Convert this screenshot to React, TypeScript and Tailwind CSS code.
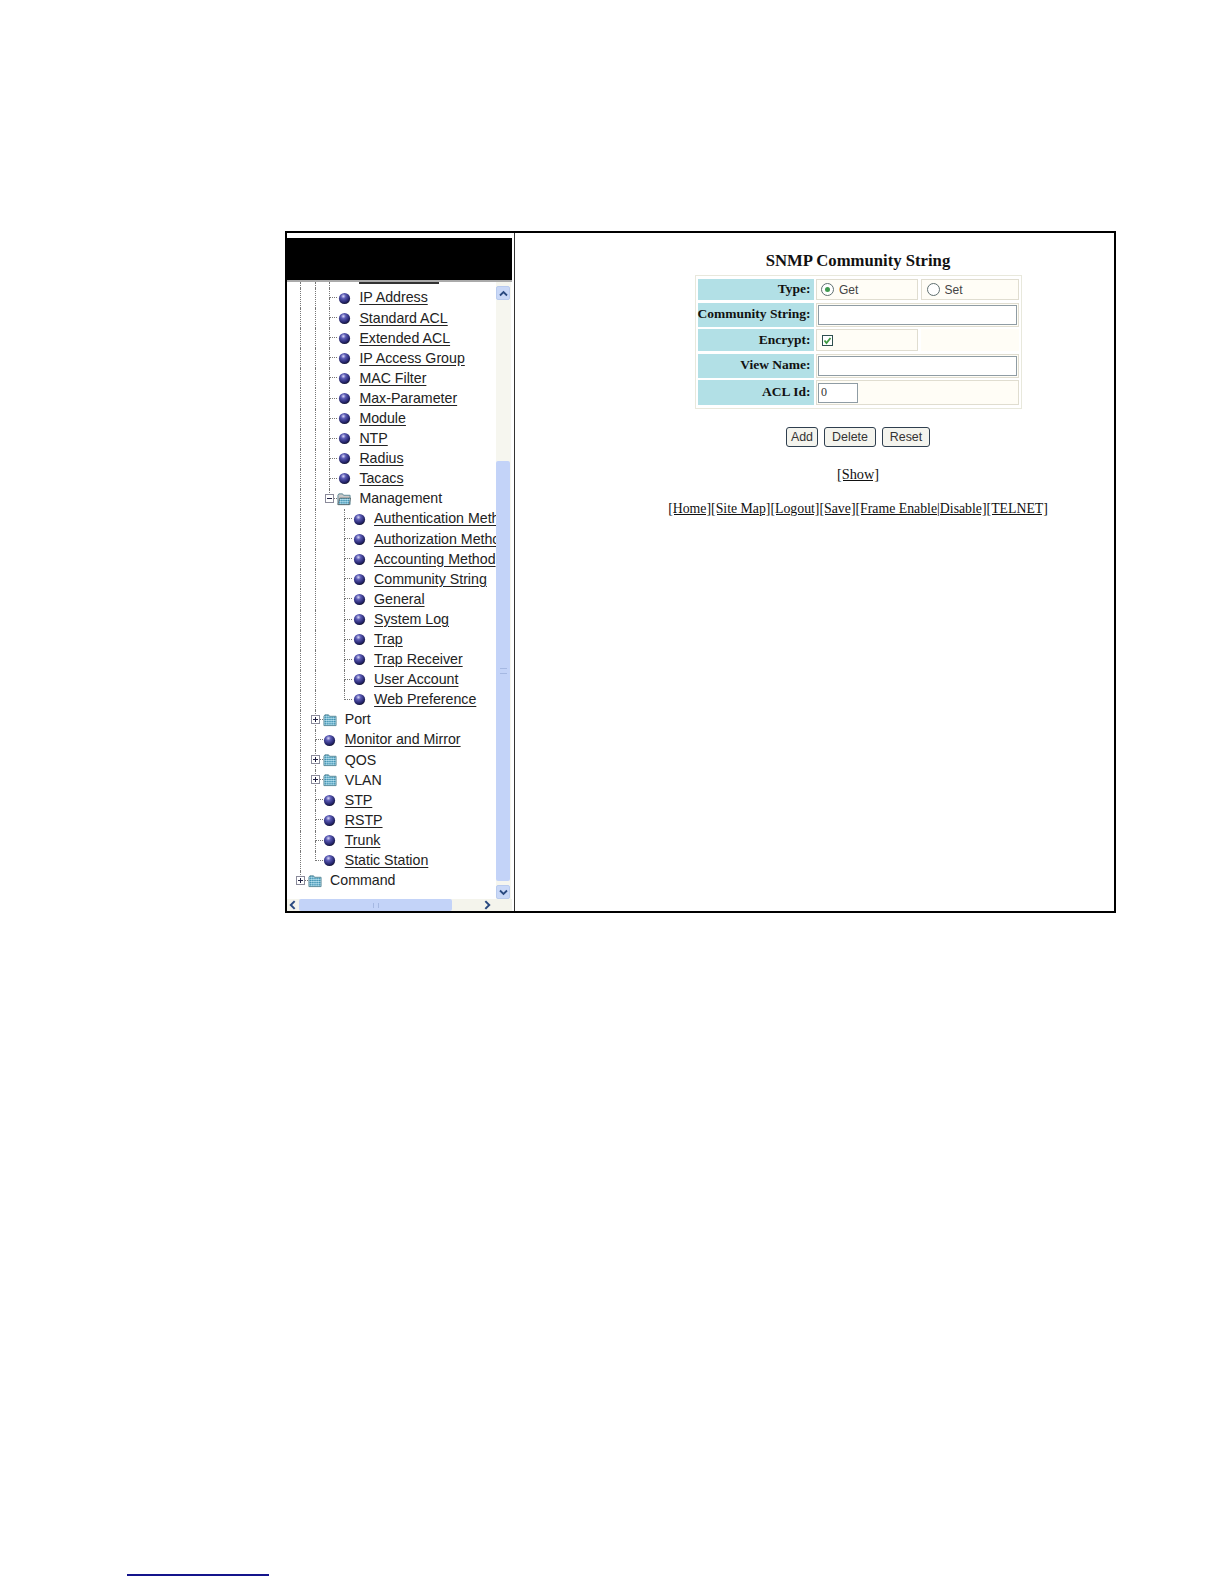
import React from 'react';

type TreeNode = { label: string; d: number; folder?: boolean; open?: boolean; last?: boolean; link?: boolean };

const nodes: TreeNode[] = [
  { label: 'IP Address', d: 2, link: true },
  { label: 'Standard ACL', d: 2, link: true },
  { label: 'Extended ACL', d: 2, link: true },
  { label: 'IP Access Group', d: 2, link: true },
  { label: 'MAC Filter', d: 2, link: true },
  { label: 'Max-Parameter', d: 2, link: true },
  { label: 'Module', d: 2, link: true },
  { label: 'NTP', d: 2, link: true },
  { label: 'Radius', d: 2, link: true },
  { label: 'Tacacs', d: 2, link: true },
  { label: 'Management', d: 2, folder: true, open: true, last: true },
  { label: 'Authentication Method', d: 3, link: true },
  { label: 'Authorization Method', d: 3, link: true },
  { label: 'Accounting Method', d: 3, link: true },
  { label: 'Community String', d: 3, link: true },
  { label: 'General', d: 3, link: true },
  { label: 'System Log', d: 3, link: true },
  { label: 'Trap', d: 3, link: true },
  { label: 'Trap Receiver', d: 3, link: true },
  { label: 'User Account', d: 3, link: true },
  { label: 'Web Preference', d: 3, link: true, last: true },
  { label: 'Port', d: 1, folder: true },
  { label: 'Monitor and Mirror', d: 1, link: true },
  { label: 'QOS', d: 1, folder: true },
  { label: 'VLAN', d: 1, folder: true },
  { label: 'STP', d: 1, link: true },
  { label: 'RSTP', d: 1, link: true },
  { label: 'Trunk', d: 1, link: true },
  { label: 'Static Station', d: 1, link: true, last: true },
  { label: 'Command', d: 0, folder: true, last: true },
];

const Bullet = () => (
  <svg width="13" height="13" viewBox="0 0 13 13">
    <defs>
      <radialGradient id="ball" cx="40%" cy="30%" r="72%">
        <stop offset="0%" stopColor="#d6d6f6" />
        <stop offset="30%" stopColor="#5a5ab4" />
        <stop offset="75%" stopColor="#26266e" />
        <stop offset="100%" stopColor="#14142e" />
      </radialGradient>
    </defs>
    <circle cx="6.5" cy="6.5" r="5.6" fill="url(#ball)" />
  </svg>
);

const Folder = ({ open }: { open?: boolean }) => (
  <svg width="15" height="14" viewBox="0 0 15 14">
    <defs>
      <pattern id="dither" width="2" height="2" patternUnits="userSpaceOnUse">
        <rect width="2" height="2" fill="#7fc4dd" />
        <rect width="1" height="1" fill="#2f7f9f" />
        <rect x="1" y="1" width="1" height="1" fill="#cfe9f2" />
      </pattern>
    </defs>
    <path d="M1 3 L2 1.5 H6 L7 3 H14 V13 H1 Z" fill={open ? '#c8c8c8' : 'url(#dither)'} stroke="#4f7f8f" strokeWidth="0.9" />
    {open && <path d="M3 6 H14.5 L13 13 H1 Z" fill="url(#dither)" stroke="#555" strokeWidth="0.7" />}
  </svg>
);

const Toggle = ({ open }: { open?: boolean }) => (
  <span className="absolute left-[-4px] top-[5px] flex h-[9px] w-[9px] items-center justify-center border border-[#8a8a9a] bg-white">
    <span className="absolute h-px w-[5px] bg-[#222244]" />
    {!open && <span className="absolute h-[5px] w-px bg-[#222244]" />}
  </span>
);

const Row = ({ node }: { node: TreeNode }) => {
  const cols = Array.from({ length: node.d }, (_, i) => i);
  return (
    <div className="flex h-[20.1px] items-center whitespace-nowrap">
      {cols.map((i) => (
        <div
          key={i}
          className={
            node.d === 3 && i === 2
              ? 'h-full w-[14.7px] shrink-0'
              : 'h-full w-[14.7px] shrink-0 border-l border-dotted border-[#777]'
          }
        />
      ))}
      <div className="relative flex h-full w-[8px] shrink-0 flex-col">
        <div className="h-1/2 border-b border-l border-dotted border-[#777]" />
        <div className={node.last ? 'h-1/2' : 'h-1/2 border-l border-dotted border-[#777]'} />
        {node.folder && <Toggle open={node.open} />}
      </div>
      <div className="flex w-[14px] shrink-0 items-center justify-center">
        {node.folder ? <Folder open={node.open} /> : <Bullet />}
      </div>
      <span className={node.link ? 'ml-[8px] text-[#222] underline underline-offset-2' : 'ml-[8px] text-[#222]'}>
        {node.label}
      </span>
    </div>
  );
};

const ScrollButton = ({ points }: { points: string }) => (
  <div className="flex h-[14px] w-[14px] items-center justify-center rounded-[2px] border border-[#b9cbee] bg-[#c9d8f7]">
    <svg width="9" height="7" viewBox="0 0 9 7">
      <polyline points={points} fill="none" stroke="#2a4a80" strokeWidth="1.8" />
    </svg>
  </div>
);

const Radio = ({ checked }: { checked?: boolean }) => (
  <span className="flex h-[13px] w-[13px] items-center justify-center rounded-full border border-[#5f6f70] bg-white">
    {checked && <span className="h-[5px] w-[5px] rounded-full bg-[#3f9a50]" />}
  </span>
);

const labelClass = 'flex items-center justify-end whitespace-nowrap bg-[#b2e0e6] pr-[3px] font-bold';
const valueClass = 'flex items-center border border-[#e0ddd0] bg-[#fffdf6]';
const inputClass = 'border border-[#8f9ca4] bg-white px-[2px] text-[12px] text-[#333] outline-none';
const buttonClass =
  'h-[20px] rounded-[3px] border border-[#2f3f4f] bg-[#f4f4ee] text-[12.4px] text-[#333]';

export default function App() {
  return (
    <div className="flex h-[1584px] w-[1224px] flex-col bg-white pt-[231px]">
      <div className="ml-[285px] flex h-[682px] w-[831px] border-2 border-black">
        <div className="flex w-[228px] shrink-0 flex-col border-r border-[#333] pr-[2px] font-['Liberation_Sans',sans-serif] text-[14.2px]">
          <div className="mt-[5px] h-[42px] shrink-0 bg-black" />
          <div className="h-[2px] shrink-0 bg-[#aaa]" />
          <div className="flex min-h-0 flex-1">
            <div className="w-[209px] shrink-0 overflow-hidden pl-[13px]">
              <div className="flex h-[6px]">
                <div className="w-[14.7px] border-l border-dotted border-[#777]" />
                <div className="w-[14.7px] border-l border-dotted border-[#777]" />
                <div className="w-[30px] border-l border-dotted border-[#777]" />
                <div className="h-[2px] w-[80px] border-b-2 border-[#333]" />
              </div>
              {nodes.map((node) => (
                <Row key={node.label} node={node} />
              ))}
            </div>
            <div className="flex w-[15px] shrink-0 flex-col bg-[#f6f6ef] pt-[4px]">
              <ScrollButton points="1,5.5 4.5,2 8,5.5" />
              <div className="mt-[161px] flex h-[420px] w-[14px] items-center justify-center rounded-[2px] bg-[#c3d3f8]">
                <div className="h-[6px] w-[7px] border-y border-[#a5b8e2]" />
              </div>
              <div className="mt-[4px]">
                <ScrollButton points="1,1.5 4.5,5 8,1.5" />
              </div>
            </div>
          </div>
          <div className="flex h-[12px] shrink-0 items-center overflow-hidden bg-[#f4f4ec]">
            <svg width="10" height="10" viewBox="0 0 9 9" className="ml-[1px]">
              <polyline points="6,1 2.5,4.5 6,8" fill="none" stroke="#2a4a80" strokeWidth="1.8" />
            </svg>
            <div className="ml-[1px] flex h-full w-[153px] items-center justify-center rounded-[2px] bg-[#c3d3f8]">
              <div className="h-[5px] w-[6px] border-x border-[#a5b8e2]" />
            </div>
            <svg width="10" height="10" viewBox="0 0 9 9" className="ml-[30px]">
              <polyline points="3,1 6.5,4.5 3,8" fill="none" stroke="#2a4a80" strokeWidth="1.8" />
            </svg>
          </div>
        </div>

        <div className="flex flex-1 flex-col items-center pl-[87px] pt-[18px] font-['Liberation_Serif',serif] text-[13.5px] text-[#111]">
          <div className="h-[20px] text-[16.7px] leading-[20px] font-bold">SNMP Community String</div>

          <div className="mt-[4px] grid grid-cols-[116px_102px_98px] grid-rows-[21px_24px_22px_24px_25px] gap-x-[2.5px] gap-y-[2.5px] border border-[#e8e8dc] px-[2px] pb-[3px] pt-[3px]">
            <div className={labelClass}>Type:</div>
            <div className={`${valueClass} gap-[5px] pl-[4px] font-['Liberation_Sans',sans-serif] text-[12px] text-[#444]`}>
              <Radio checked />
              Get
            </div>
            <div className={`${valueClass} gap-[5px] pl-[5px] font-['Liberation_Sans',sans-serif] text-[12px] text-[#444]`}>
              <Radio />
              Set
            </div>

            <div className={labelClass}>Community String:</div>
            <div className={`${valueClass} col-span-2 pl-px`}>
              <input readOnly className={`${inputClass} h-[20px] w-[199px]`} />
            </div>

            <div className={labelClass}>Encrypt:</div>
            <div className={`${valueClass} pl-[5px]`}>
              <span className="flex h-[11px] w-[11px] items-center justify-center border border-[#2f4f4f] bg-white">
                <svg width="9" height="9" viewBox="0 0 9 9">
                  <polyline points="1.5,4.5 3.5,7 7.5,2" fill="none" stroke="#3f9a40" strokeWidth="1.8" />
                </svg>
              </span>
            </div>
            <div className="bg-[#fffdf6]" />

            <div className={labelClass}>View Name:</div>
            <div className={`${valueClass} col-span-2 pl-px`}>
              <input readOnly className={`${inputClass} h-[20px] w-[199px]`} />
            </div>

            <div className={labelClass}>ACL Id:</div>
            <div className={`${valueClass} col-span-2 pl-px`}>
              <input readOnly value="0" className={`${inputClass} h-[20px] w-[40px]`} />
            </div>
          </div>

          <div className="mt-[18px] flex gap-[6px] font-['Liberation_Sans',sans-serif]">
            <button className={`${buttonClass} w-[32px]`}>Add</button>
            <button className={`${buttonClass} w-[52px]`}>Delete</button>
            <button className={`${buttonClass} w-[48px]`}>Reset</button>
          </div>

          <div className="mt-[17px] h-[20px] text-[14.3px] leading-[20px] underline">[Show]</div>
          <div className="mt-[15px] h-[20px] whitespace-nowrap text-[13.8px] leading-[20px] underline">
            [Home][Site Map][Logout][Save][Frame Enable|Disable][TELNET]
          </div>
        </div>
      </div>

      <div className="ml-[127px] mt-[661px] h-[1.5px] w-[142px] bg-[#14148c]" />
    </div>
  );
}
